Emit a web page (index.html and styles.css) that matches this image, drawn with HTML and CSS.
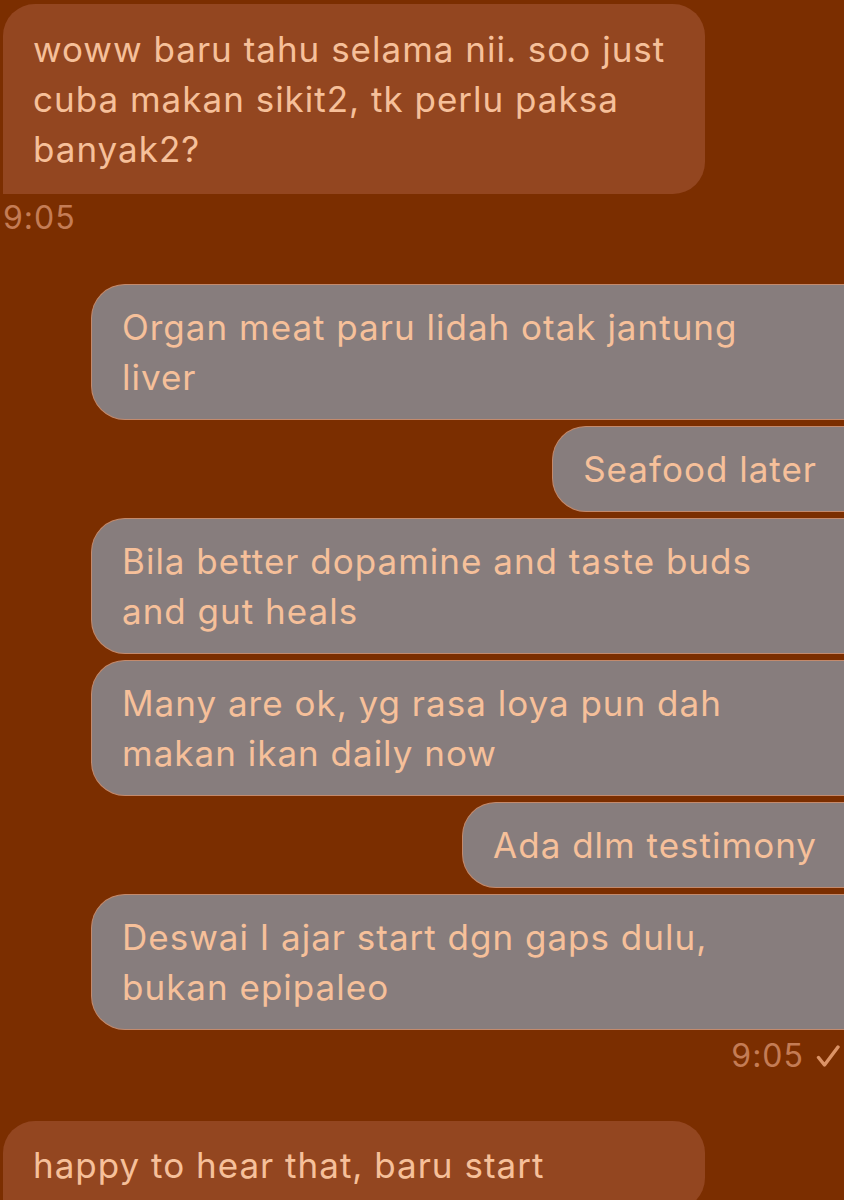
FILE: index.html
```html
<!DOCTYPE html>
<html>
<head>
<meta charset="utf-8">
<link rel="stylesheet" href="styles.css">
</head>
<body>
<div class="chat">
  <div class="msg in">woww baru tahu selama nii. soo just<br>cuba makan sikit2, tk perlu paksa<br>banyak2?</div>
  <div class="time-in">9:05</div>

  <div class="group">
    <div class="msg out wide">Organ meat paru lidah otak jantung<br>liver</div>
    <div class="msg out">Seafood later</div>
    <div class="msg out wide">Bila better dopamine and taste buds<br>and gut heals</div>
    <div class="msg out wide">Many are ok, yg rasa loya pun dah<br>makan ikan daily now</div>
    <div class="msg out">Ada dlm testimony</div>
    <div class="msg out wide">Deswai I ajar start dgn gaps dulu,<br>bukan epipaleo</div>
  </div>
  <div class="time-out">
    <span>9:05</span>
    <svg class="check" width="24" height="24" viewBox="0 0 24 24"><path d="M2.5 13.5 L8.5 21 L22 3" fill="none" stroke="currentColor" stroke-width="3.4" stroke-linecap="round" stroke-linejoin="round"/></svg>
  </div>

  <div class="msg in last">happy to hear that, baru start</div>
</div>
</body>
</html>
```
FILE: styles.css
```css
html, body {
  margin: 0;
  background: #7b2e00;
}
body {
  font-family: Inter, "Noto Sans", sans-serif;
  color: #f6c09a;
}
.chat {
  display: flex;
  flex-direction: column;
  padding-top: 4px;
  height: 1196px;
  overflow: hidden;
}
.msg {
  box-sizing: border-box;
  font-size: 35px;
  letter-spacing: 1px;
  line-height: 50px;
  white-space: nowrap;
}
.in {
  align-self: flex-start;
  margin-left: 3px;
  width: 702px;
  background: #934620;
  border-radius: 32px 32px 32px 0;
  padding: 20px 30px;
}
.in.last {
  margin-top: 47px;
  padding-top: 19px;
}
.time-in {
  margin: 6px 0 0 3px;
  font-size: 32px;
  letter-spacing: 1px;
  line-height: 36px;
  color: #c47c55;
}
.group {
  display: flex;
  flex-direction: column;
  align-items: flex-end;
  gap: 6px;
  margin-top: 48px;
}
.out {
  background: #877d7d;
  border: 1px solid #c48a6c;
  border-right: none;
  border-radius: 34px 0 0 34px;
  padding: 17px 27px 17px 30px;
}
.out.wide {
  width: 753px;
}
.time-out {
  align-self: flex-end;
  display: flex;
  align-items: center;
  gap: 12px;
  margin: 8px 4px 0 0;
  font-size: 32px;
  letter-spacing: 1px;
  line-height: 36px;
  color: #c47c55;
}
.check {
  color: #dc9366;
}
```
